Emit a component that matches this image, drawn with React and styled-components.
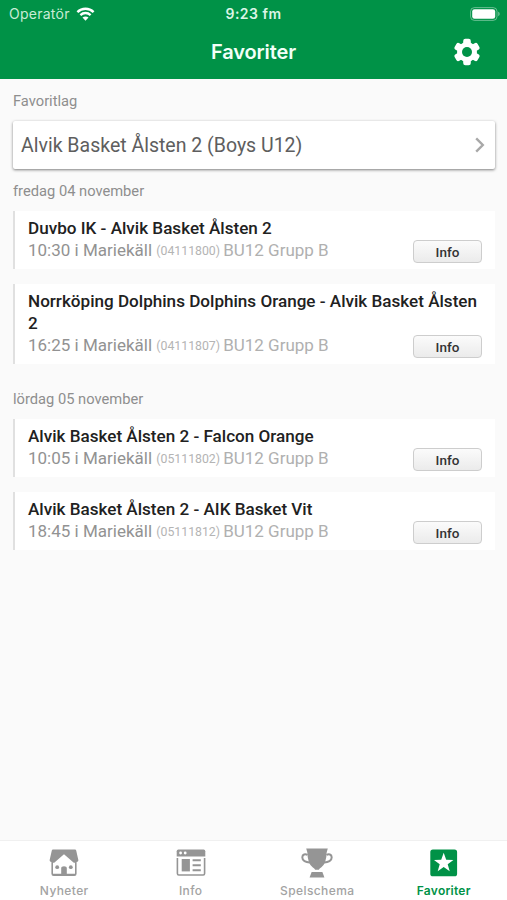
import styled, { createGlobalStyle } from 'styled-components'

const days = [
  {
    label: 'fredag 04 november',
    games: [
      { teams: 'Duvbo IK - Alvik Basket Ålsten 2', time: '10:30', nr: '04111800' },
      {
        teams: 'Norrköping Dolphins Dolphins Orange - Alvik Basket Ålsten 2',
        time: '16:25',
        nr: '04111807',
      },
    ],
  },
  {
    label: 'lördag 05 november',
    games: [
      { teams: 'Alvik Basket Ålsten 2 - Falcon Orange', time: '10:05', nr: '05111802' },
      { teams: 'Alvik Basket Ålsten 2 - AIK Basket Vit', time: '18:45', nr: '05111812' },
    ],
  },
]

const WifiIcon = () => (
  <svg width="19" height="14" viewBox="0 0 18 14" fill="none" stroke="#fff">
    <path d="M0.9 5.1C5.4 0.6 12.6 0.6 17.1 5.1" strokeWidth="2.4" />
    <path d="M3.9 8.1C6.8 5.3 11.2 5.3 14.1 8.1" strokeWidth="2.3" />
    <path d="M6 10.6C7.7 9 10.3 9 12 10.6L9 13.7Z" fill="#fff" stroke="none" />
  </svg>
)

const BatteryIcon = () => (
  <svg width="31" height="14" viewBox="0 0 31 14">
    <rect x="0.6" y="0.6" width="26.4" height="12.8" rx="3.8" fill="none" stroke="#fff" strokeOpacity="0.4" />
    <rect x="2.2" y="2.2" width="23" height="9.6" rx="2.3" fill="#fff" />
    <path d="M28.3 4.8C30 5.4 30 8.6 28.3 9.2Z" fill="#fff" fillOpacity="0.5" />
  </svg>
)

const GearIcon = () => (
  <svg width="26" height="28" viewBox="0 0 26 28">
    <g fill="#fff">
      <circle cx="13" cy="14" r="10" />
      {[0, 60, 120].map((angle) => (
        <rect key={angle} x="9.2" y="0.8" width="7.6" height="26.4" rx="2.2" transform={`rotate(${angle} 13 14)`} />
      ))}
    </g>
    <circle cx="13" cy="14" r="5" fill="#009247" />
  </svg>
)

const ChevronIcon = () => (
  <svg width="10" height="16" viewBox="0 0 10 16" fill="none" stroke="#a8a8a8" strokeWidth="2.4">
    <path d="M1.2 1.4L7.8 8L1.2 14.6" />
  </svg>
)

const HouseIcon = () => (
  <svg width="30" height="28" viewBox="0 0 30 28" fill="#959595">
    <path d="M4 0.5H26Q27 0.5 27.2 1.5L29.4 11.2Q29.4 13 27.6 13V24.8Q27.6 27 25.4 27H4.6Q2.4 27 2.4 24.8V13Q0.6 13 0.6 11.2L2.8 1.5Q3 0.5 4 0.5Z" />
    <path d="M15 5.3L24.8 13.8H26V24.8H4V13.8H5.2Z" fill="#fff" />
    <path d="M12.2 26V18.8Q12.2 17.2 15 17.2Q17.8 17.2 17.8 18.8V26Z" />
    <circle cx="8.2" cy="18.2" r="1.9" />
    <circle cx="21.8" cy="18.2" r="1.9" />
  </svg>
)

const NewsIcon = () => (
  <svg width="30" height="28" viewBox="0 0 30 28" fill="#959595">
    <path d="M2.4 0.5H27.6Q29.3 0.5 29.3 2.2V7.4H0.7V2.2Q0.7 0.5 2.4 0.5Z" />
    <circle cx="4.6" cy="4" r="1.4" fill="#fff" />
    <circle cx="9.2" cy="4" r="1.4" fill="#fff" />
    <path d="M1.4 9V24.6Q1.4 26 2.8 26H27.2Q28.6 26 28.6 24.6V9" fill="none" stroke="#959595" strokeWidth="1.6" />
    <rect x="5.7" y="10" width="8.2" height="12.4" />
    <path d="M16.6 11.2H24.8M16.6 16.2H24.8M16.6 21.2H24.8" stroke="#959595" strokeWidth="2.1" />
  </svg>
)

const TrophyIcon = () => (
  <svg width="32" height="30" viewBox="0 0 32 30" fill="#959595">
    <path d="M5.2 0.5H26.8L25.7 4.3Q25.4 15.7 20.4 19.2Q18.4 20.5 17.8 21.8H14.2Q13.6 20.5 11.6 19.2Q6.6 15.7 6.3 4.3Z" />
    <path d="M6.5 7C4.2 5.5 1.4 6.4 1.3 9.2C1.2 12.6 4.8 14.5 9 14.4M25.5 7C27.8 5.5 30.6 6.4 30.7 9.2C30.8 12.6 27.2 14.5 23 14.4" fill="none" stroke="#959595" strokeWidth="2" />
    <path d="M10.6 24H21.4L23.4 29.4H8.6Z" />
  </svg>
)

const StarIcon = () => (
  <svg width="28" height="28" viewBox="0 0 28 28">
    <rect x="0.3" y="0.5" width="26.8" height="26.8" rx="2.6" fill="#009247" />
    <path d="M13.7 3.7L16.2 10.7L23.4 10.9L17.7 15.3L19.7 22.2L13.7 18.1L7.7 22.2L9.7 15.3L4 10.9L11.2 10.7Z" fill="#fff" />
  </svg>
)

const tabs = [
  { label: 'Nyheter', Icon: HouseIcon },
  { label: 'Info', Icon: NewsIcon },
  { label: 'Spelschema', Icon: TrophyIcon },
  { label: 'Favoriter', Icon: StarIcon, active: true },
]

const Game = ({ teams, time, nr }) => (
  <GameCard>
    <Teams>{teams}</Teams>
    <GameRow>
      <Meta>
        {time} i Mariekäll <Number>({nr}) </Number>
        <Group>BU12 Grupp B</Group>
      </Meta>
      <InfoButton type="button">Info</InfoButton>
    </GameRow>
  </GameCard>
)

const App = () => (
  <Screen>
    <GlobalStyle />
    <StatusBar>
      <Carrier>
        Operatör
        <WifiIcon />
      </Carrier>
      <Clock>9:23 fm</Clock>
      <Battery>
        <BatteryIcon />
      </Battery>
    </StatusBar>
    <NavBar>
      <Title>Favoriter</Title>
      <Settings type="button" aria-label="Inställningar">
        <GearIcon />
      </Settings>
    </NavBar>
    <Content>
      <Heading>Favoritlag</Heading>
      <TeamButton type="button">
        <span>Alvik Basket Ålsten 2 (Boys U12)</span>
        <ChevronIcon />
      </TeamButton>
      {days.map((day) => (
        <Day key={day.label}>
          <Heading>{day.label}</Heading>
          <GameList>
            {day.games.map((game) => (
              <Game key={game.nr} {...game} />
            ))}
          </GameList>
        </Day>
      ))}
    </Content>
    <TabBar>
      {tabs.map(({ label, Icon, active }) => (
        <Tab key={label} $active={active}>
          <TabIcon>
            <Icon />
          </TabIcon>
          {label}
        </Tab>
      ))}
    </TabBar>
  </Screen>
)

export default App

const GlobalStyle = createGlobalStyle`
  * {
    box-sizing: border-box;
  }

  body {
    margin: 0;
  }

  button {
    font-family: inherit;
    padding: 0;
    border: 0;
    background: none;
  }

  svg {
    display: block;
    flex-shrink: 0;
  }
`

const Screen = styled.div`
  display: flex;
  flex-direction: column;
  width: 507px;
  height: 900px;
  overflow: hidden;
  background: #fafafa;
  font-family: Roboto, sans-serif;
`

const StatusBar = styled.div`
  display: grid;
  grid-template-columns: 1fr auto 1fr;
  align-items: center;
  height: 27px;
  padding: 0 6px 0 9px;
  background: #009247;
  color: #fff;
  font-family: Inter, sans-serif;
  font-size: 14px;
`

const Carrier = styled.div`
  display: flex;
  align-items: center;
  gap: 6px;
  color: #c9ecd6;
  letter-spacing: 0.25px;
`

const Clock = styled.div`
  margin-left: -3px;
  color: #dcf5e6;
  font-weight: 600;
  letter-spacing: 0.5px;
`

const Battery = styled.div`
  display: flex;
  justify-content: flex-end;
`

const NavBar = styled.div`
  display: grid;
  grid-template-columns: 1fr auto 1fr;
  align-items: center;
  height: 52px;
  padding: 0 27px 2px;
  background: #009247;
`

const Title = styled.h1`
  grid-column: 2;
  margin: 0;
  color: #f2fff7;
  font-family: Inter, sans-serif;
  font-size: 20px;
  font-weight: 600;
  letter-spacing: -0.1px;
`

const Settings = styled.button`
  justify-self: end;
`

const Content = styled.div`
  flex: 1;
  padding: 12px 12px 0 13px;
`

const Heading = styled.h2`
  margin: 0;
  color: #8e8e8e;
  font-size: 14.7px;
  font-weight: 400;
  line-height: 20px;
`

const TeamButton = styled.button`
  display: flex;
  align-items: center;
  justify-content: space-between;
  width: 100%;
  height: 48px;
  margin: 10px 0 12px;
  padding: 0 10px 0 8px;
  border-radius: 2px;
  background: #fff;
  box-shadow: 0 1px 3px rgba(0, 0, 0, 0.5);
  color: #5e5e5e;
  font-size: 19.5px;
`

const Day = styled.section`
  margin-bottom: 25px;
`

const GameList = styled.div`
  display: flex;
  flex-direction: column;
  gap: 15px;
  padding-top: 10px;
`

const GameCard = styled.article`
  padding: 6px 13px 6px;
  border-left: 2px solid #e0e0e0;
  background: #fff;
`

const Teams = styled.h3`
  margin: 0;
  color: #212121;
  font-size: 17.1px;
  font-weight: 500;
  line-height: 22px;
`

const GameRow = styled.div`
  display: flex;
  align-items: flex-start;
  justify-content: space-between;
  height: 24px;
`

const Meta = styled.div`
  color: #929292;
  font-size: 17px;
  line-height: 22px;
`

const Number = styled.span`
  color: #b4b4b4;
  font-size: 12.3px;
  line-height: 1;
  vertical-align: 1px;
`

const Group = styled.span`
  color: #b0b0b0;
`

const InfoButton = styled.button`
  align-self: flex-end;
  width: 69px;
  height: 23px;
  border: 1px solid #cdcdcd;
  border-radius: 4px;
  background: linear-gradient(#fbfbfb, #ebebeb);
  color: #333;
  font-size: 13.5px;
  font-weight: 500;
`

const TabBar = styled.nav`
  display: grid;
  grid-template-columns: repeat(4, 1fr);
  height: 60px;
  padding-left: 1px;
  border-top: 1px solid #f0f0f0;
  background: #fff;
`

const Tab = styled.div`
  display: flex;
  flex-direction: column;
  align-items: center;
  padding-top: 7px;
  color: ${(props) => (props.$active ? '#009247' : '#a3a3a3')};
  font-family: Inter, sans-serif;
  font-size: 12px;
  font-weight: ${(props) => (props.$active ? 600 : 500)};
  letter-spacing: ${(props) => (props.$active ? '0.25px' : '0.4px')};
  line-height: 16px;
`

const TabIcon = styled.div`
  display: flex;
  align-items: center;
  height: 30px;
  margin-bottom: 5px;
`
